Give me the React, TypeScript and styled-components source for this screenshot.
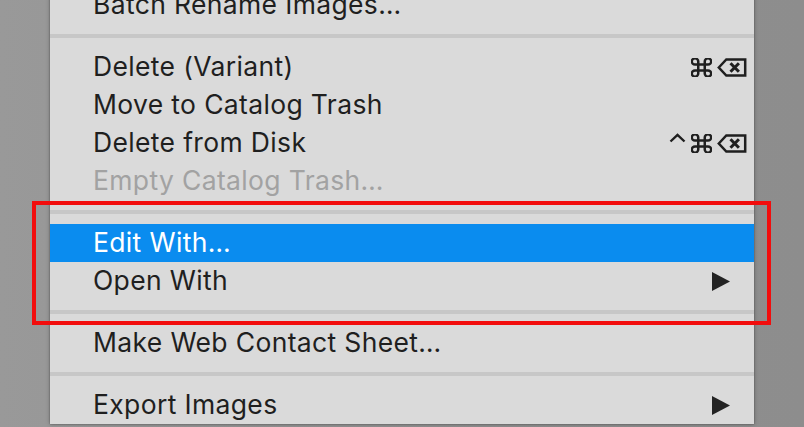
import React from 'react';
import styled, { createGlobalStyle } from 'styled-components';

const GlobalStyle = createGlobalStyle`
  html, body {
    margin: 0;
    padding: 0;
    overflow: hidden;
  }
  body {
    font-family: Inter, "Noto Sans", "Liberation Sans", sans-serif;
  }
`;

const Screen = styled.div`
  position: relative;
  width: 804px;
  height: 427px;
  overflow: hidden;
  display: flex;
  align-items: flex-start;
  background: linear-gradient(90deg, #999999 0%, #8f8f8f 60%, #8d8d8d 100%);
`;

const Menu = styled.div`
  margin: -14px 0 0 50px;
  width: 704px;
  display: flex;
  flex-direction: column;
  background: #dadada;
  box-shadow: 0 0 4px rgba(0, 0, 0, 0.35), 0 0 1px rgba(0, 0, 0, 0.4);
`;

const Item = styled.div<{ $active?: boolean; $disabled?: boolean }>`
  height: 38px;
  box-sizing: border-box;
  padding: 0 0 2px 43px;
  display: flex;
  align-items: center;
  font-size: 26.5px;
  letter-spacing: 0.35px;
  color: ${(p) => (p.$active ? '#ffffff' : p.$disabled ? '#a2a2a2' : '#1f1f1f')};
  background: ${(p) => (p.$active ? '#0a8cef' : 'transparent')};
`;

const Label = styled.span`
  flex: 1;
  white-space: nowrap;
`;

const Separator = styled.div`
  height: 24px;
  display: flex;
  align-items: center;

  &::before {
    content: '';
    display: block;
    width: 100%;
    height: 4px;
    background: #c7c7c7;
  }
`;

const Keys = styled.div`
  display: flex;
  align-items: center;
  gap: 5px;
  margin: 2px 7px 0 0;
  color: #1f1f1f;
`;

const CaretKey = styled.svg`
  align-self: flex-start;
  margin-top: -1px;
`;

const Submenu = styled.svg`
  margin: 2px 24px 0 0;
`;

const Highlight = styled.div`
  position: absolute;
  left: 32px;
  top: 201px;
  width: 739px;
  height: 124px;
  box-sizing: border-box;
  border: 4px solid #f20d0d;
  pointer-events: none;
`;

const CommandKey = () => (
  <svg width="21" height="19" viewBox="2.3 2.6 19.4 18.8" fill="none" stroke="currentColor" strokeWidth="2.3" preserveAspectRatio="none">
    <path d="M15 6v12a3 3 0 1 0 3-3H6a3 3 0 1 0 3 3V6a3 3 0 1 0-3 3h12a3 3 0 1 0-3-3" />
  </svg>
);

const DeleteKey = () => (
  <svg width="30" height="19" viewBox="0 0 30 19" fill="none" stroke="currentColor" strokeWidth="2.5">
    <path d="M1.8 9.5L9.3 1.5H28.2V17.5H9.3Z" strokeLinejoin="miter" />
    <path d="M13.5 5.2l8.4 8.6M21.9 5.2l-8.4 8.6" strokeWidth="3" />
  </svg>
);

const ControlKey = () => (
  <CaretKey width="17" height="10" viewBox="0 0 17 10" fill="none" stroke="currentColor" strokeWidth="2.4">
    <path d="M1.5 8.5L8.5 1.8L15.5 8.5" />
  </CaretKey>
);

const Arrow = () => (
  <Submenu width="18" height="19" viewBox="0 0 18 19">
    <path d="M0 0L18 9.5L0 19Z" fill="#232323" />
  </Submenu>
);

export default function App() {
  return (
    <>
      <GlobalStyle />
      <Screen>
        <Menu>
          <Item>
            <Label>Batch Rename Images…</Label>
          </Item>
          <Separator />
          <Item>
            <Label>Delete (Variant)</Label>
            <Keys>
              <CommandKey />
              <DeleteKey />
            </Keys>
          </Item>
          <Item>
            <Label>Move to Catalog Trash</Label>
          </Item>
          <Item>
            <Label>Delete from Disk</Label>
            <Keys>
              <ControlKey />
              <CommandKey />
              <DeleteKey />
            </Keys>
          </Item>
          <Item $disabled>
            <Label>Empty Catalog Trash…</Label>
          </Item>
          <Separator />
          <Item $active>
            <Label>Edit With…</Label>
          </Item>
          <Item>
            <Label>Open With</Label>
            <Arrow />
          </Item>
          <Separator />
          <Item>
            <Label>Make Web Contact Sheet…</Label>
          </Item>
          <Separator />
          <Item>
            <Label>Export Images</Label>
            <Arrow />
          </Item>
        </Menu>
        <Highlight />
      </Screen>
    </>
  );
}
